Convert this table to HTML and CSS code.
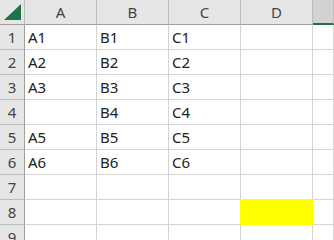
FILE: index.html
```html
<!DOCTYPE html>
<html lang="ja">
<head>
  <meta charset="UTF-8" />
  <title>Sheet1</title>
  <link rel="stylesheet" href="styles.css">
</head>
<body>
  <div class="sheet">
    <!-- column headers -->
    <div class="corner">
      <svg width="25" height="24" viewBox="0 0 25 24"><polygon points="4,20 21,20 21,4" fill="#217346"/></svg>
    </div>
    <div class="col-head">A</div>
    <div class="col-head">B</div>
    <div class="col-head">C</div>
    <div class="col-head">D</div>
    <div class="col-head selected"></div>

    <!-- rows -->
    <div class="row-head">1</div><div class="cell">A1</div><div class="cell">B1</div><div class="cell">C1</div><div class="cell"></div><div class="cell"></div>
    <div class="row-head">2</div><div class="cell">A2</div><div class="cell">B2</div><div class="cell">C2</div><div class="cell"></div><div class="cell"></div>
    <div class="row-head">3</div><div class="cell">A3</div><div class="cell">B3</div><div class="cell">C3</div><div class="cell"></div><div class="cell"></div>
    <div class="row-head">4</div><div class="cell"></div><div class="cell">B4</div><div class="cell">C4</div><div class="cell"></div><div class="cell"></div>
    <div class="row-head">5</div><div class="cell">A5</div><div class="cell">B5</div><div class="cell">C5</div><div class="cell"></div><div class="cell"></div>
    <div class="row-head">6</div><div class="cell">A6</div><div class="cell">B6</div><div class="cell">C6</div><div class="cell"></div><div class="cell"></div>
    <div class="row-head">7</div><div class="cell"></div><div class="cell"></div><div class="cell"></div><div class="cell"></div><div class="cell"></div>
    <div class="row-head">8</div><div class="cell"></div><div class="cell"></div><div class="cell"></div><div class="cell fill-yellow"></div><div class="cell"></div>
    <div class="row-head">9</div><div class="cell"></div><div class="cell"></div><div class="cell"></div><div class="cell"></div><div class="cell"></div>
  </div>
</body>
</html>
```

FILE: styles.css
```css
body {
  margin: 0;
  background: #fff;
  overflow: hidden;
  font-family: "Noto Sans", "Noto Sans CJK JP", sans-serif;
  font-size: 15px;
  color: #222;
}
.sheet {
  display: grid;
  grid-template-columns: 25px repeat(4, 72px) 1fr;
  grid-template-rows: 25px repeat(9, 25px);
}
.sheet > div {
  box-sizing: border-box;
  border-right: 1px solid #d4d4d4;
  border-bottom: 1px solid #d4d4d4;
  line-height: 24px;
  white-space: nowrap;
  overflow: hidden;
}
.corner {
  background: #e6e6e6;
  border-right-color: #bdbdbd !important;
  border-bottom-color: #9e9e9e !important;
}
.corner svg {
  display: block;
}
.col-head {
  background: #e6e6e6;
  text-align: center;
  color: #444;
  border-right-color: #bdbdbd !important;
  border-bottom-color: #9e9e9e !important;
}
.col-head.selected {
  background: #d2d2d2;
  border-bottom: 2px solid #217346 !important;
}
.row-head {
  background: #e6e6e6;
  text-align: center;
  color: #444;
  border-right-color: #9e9e9e !important;
  border-bottom-color: #bdbdbd !important;
}
.cell {
  padding-left: 3px;
}
.fill-yellow {
  background: #ffff00;
  border-color: #ffff00 !important;
  margin: -1px 0 0 -1px;
}
```
